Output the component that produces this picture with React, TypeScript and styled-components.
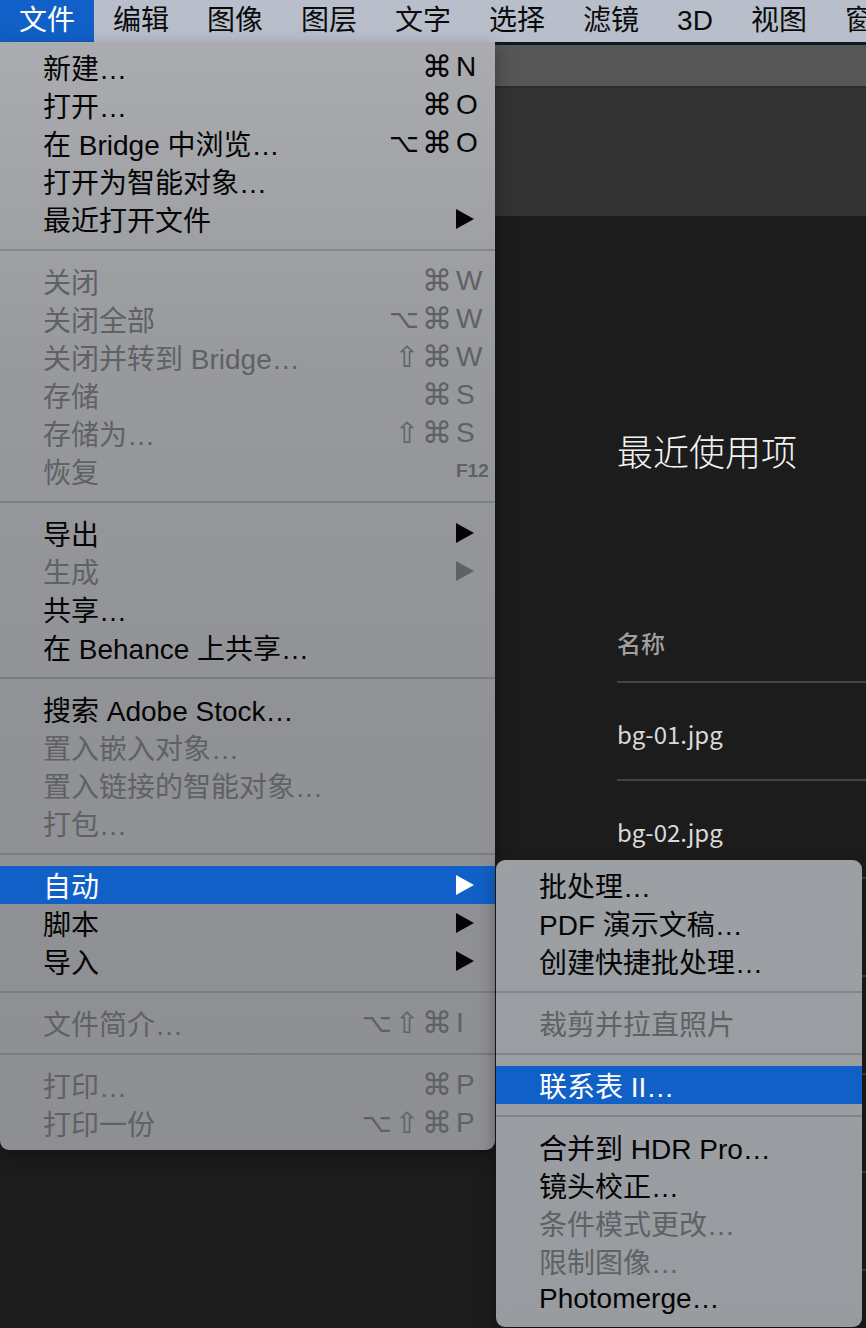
import React from "react";
import styled, { createGlobalStyle } from "styled-components";

const GlobalStyle = createGlobalStyle`
  html, body {
    margin: 0;
    padding: 0;
    background: #1c1c1c;
  }
  * {
    box-sizing: border-box;
  }
`;

const Screen = styled.div`
  position: relative;
  width: 866px;
  height: 1328px;
  overflow: hidden;
  display: flex;
  flex-direction: column;
  background: #1c1c1c;
  font-family: "Liberation Sans", "Noto Sans CJK SC", sans-serif;
`;

const MenuBar = styled.div`
  display: flex;
  height: 42px;
  flex-shrink: 0;
  background: #b8bfcb;
  white-space: nowrap;
  overflow: hidden;
`;

const BarItem = styled.div<{ $active?: boolean }>`
  padding: 0 19px;
  line-height: 42px;
  font-size: 28px;
  color: ${(p) => (p.$active ? "#fff" : "#0b0b0b")};
  background: ${(p) => (p.$active ? "#1160c7" : "transparent")};
`;

const TopStrip = styled.div`
  height: 3px;
  background: #121826;
`;

const ToolBand = styled.div`
  height: 43px;
  background: #565656;
  border-bottom: 2px solid #2b2b2b;
`;

const OptionsBand = styled.div`
  height: 128px;
  background: #333333;
`;

const Home = styled.div`
  flex: 1;
  padding-left: 617px;
  font-family: "Noto Sans CJK SC", sans-serif;
`;

const Title = styled.h1`
  margin: 209px 0 0;
  font-size: 36px;
  line-height: 50px;
  font-weight: 300;
  color: #f2f2f2;
  white-space: nowrap;
`;

const HeaderCell = styled.div`
  margin-top: 151px;
  padding-bottom: 21px;
  font-size: 24px;
  line-height: 34px;
  font-weight: 500;
  color: #a0a0a0;
  border-bottom: 2px solid #444;
`;

const FileRow = styled.div`
  height: 98px;
  padding-top: 4px;
  display: flex;
  align-items: center;
  font-size: 24px;
  color: #dadada;
  white-space: nowrap;
  border-bottom: 2px solid #424242;
`;

const Menu = styled.div<{ $left: number; $top: number; $width: number; $sub?: boolean }>`
  position: absolute;
  left: ${(p) => p.$left}px;
  top: ${(p) => p.$top}px;
  width: ${(p) => p.$width}px;
  padding: 6px 0 ${(p) => (p.$sub ? 9 : 8)}px;
  border-radius: ${(p) => (p.$sub ? "9px" : "0 0 9px 9px")};
  background: ${(p) =>
    p.$sub
      ? "linear-gradient(180deg, #9c9fa3 0%, #989b9f 100%)"
      : "linear-gradient(180deg, #aaacaf 0%, #97999c 30%, #909295 60%, #8d8f92 100%)"};
  box-shadow: 0 6px 18px rgba(0, 0, 0, 0.35);
  white-space: nowrap;
`;

const Row = styled.div<{ $active?: boolean; $disabled?: boolean }>`
  display: flex;
  align-items: center;
  height: 38px;
  padding: 0 5px 0 43px;
  font-size: 28px;
  background: ${(p) => (p.$active ? "#1160c7" : "transparent")};
  color: ${(p) => (p.$active ? "#fff" : p.$disabled ? "#5f6164" : "#050505")};
`;

const Label = styled.span`
  flex: 1;
`;

const Mods = styled.span`
  display: flex;
  justify-content: flex-end;
  gap: 3px;
`;

const Mod = styled.span<{ $size: number }>`
  font-family: "DejaVu Sans", sans-serif;
  font-size: ${(p) => p.$size}px;
  line-height: 38px;
`;

const Key = styled.span<{ $small?: boolean }>`
  width: 34px;
  margin-left: 4px;
  font-size: ${(p) => (p.$small ? "19px" : "28px")};
  font-weight: ${(p) => (p.$small ? 700 : 400)};
  display: flex;
  align-items: center;
`;

const Separator = styled.div`
  height: 24px;
  display: flex;
  align-items: center;
  &::after {
    content: "";
    flex: 1;
    height: 2px;
    background: rgba(70, 72, 76, 0.28);
  }
`;

type Item = {
  label: string;
  mods?: string[];
  keyName?: string;
  small?: boolean;
  disabled?: boolean;
  arrow?: boolean;
  active?: boolean;
};

// DejaVu draws these modifier glyphs at quite different widths
const modSize: Record<string, number> = { "⌘": 30, "⌥": 26, "⇧": 29 };

const mainMenu: Item[][] = [
  [
    { label: "新建…", mods: ["⌘"], keyName: "N" },
    { label: "打开…", mods: ["⌘"], keyName: "O" },
    { label: "在 Bridge 中浏览…", mods: ["⌥", "⌘"], keyName: "O" },
    { label: "打开为智能对象…" },
    { label: "最近打开文件", arrow: true },
  ],
  [
    { label: "关闭", mods: ["⌘"], keyName: "W", disabled: true },
    { label: "关闭全部", mods: ["⌥", "⌘"], keyName: "W", disabled: true },
    { label: "关闭并转到 Bridge…", mods: ["⇧", "⌘"], keyName: "W", disabled: true },
    { label: "存储", mods: ["⌘"], keyName: "S", disabled: true },
    { label: "存储为…", mods: ["⇧", "⌘"], keyName: "S", disabled: true },
    { label: "恢复", keyName: "F12", small: true, disabled: true },
  ],
  [
    { label: "导出", arrow: true },
    { label: "生成", arrow: true, disabled: true },
    { label: "共享…" },
    { label: "在 Behance 上共享…" },
  ],
  [
    { label: "搜索 Adobe Stock…" },
    { label: "置入嵌入对象…", disabled: true },
    { label: "置入链接的智能对象…", disabled: true },
    { label: "打包…", disabled: true },
  ],
  [
    { label: "自动", arrow: true, active: true },
    { label: "脚本", arrow: true },
    { label: "导入", arrow: true },
  ],
  [{ label: "文件简介…", mods: ["⌥", "⇧", "⌘"], keyName: "I", disabled: true }],
  [
    { label: "打印…", mods: ["⌘"], keyName: "P", disabled: true },
    { label: "打印一份", mods: ["⌥", "⇧", "⌘"], keyName: "P", disabled: true },
  ],
];

const autoMenu: Item[][] = [
  [{ label: "批处理…" }, { label: "PDF 演示文稿…" }, { label: "创建快捷批处理…" }],
  [{ label: "裁剪并拉直照片", disabled: true }],
  [{ label: "联系表 II…", active: true }],
  [
    { label: "合并到 HDR Pro…" },
    { label: "镜头校正…" },
    { label: "条件模式更改…", disabled: true },
    { label: "限制图像…", disabled: true },
    { label: "Photomerge…" },
  ],
];

const barItems = ["文件", "编辑", "图像", "图层", "文字", "选择", "滤镜", "3D", "视图", "窗口"];

// rows further down sit under the submenu, only their divider lines peek out
const files = ["bg-01.jpg", "bg-02.jpg", "", "", "", ""];

function Arrow() {
  return (
    <svg width="18" height="20" viewBox="0 0 18 20">
      <polygon points="0,0 18,10 0,20" fill="currentColor" />
    </svg>
  );
}

function MenuRow({ item }: { item: Item }) {
  return (
    <Row $active={item.active} $disabled={item.disabled}>
      <Label>{item.label}</Label>
      {item.mods && (
        <Mods>
          {item.mods.map((m, i) => (
            <Mod key={i} $size={modSize[m]}>
              {m}
            </Mod>
          ))}
        </Mods>
      )}
      <Key $small={item.small}>{item.arrow ? <Arrow /> : item.keyName}</Key>
    </Row>
  );
}

function MenuGroups({ groups }: { groups: Item[][] }) {
  return (
    <>
      {groups.map((g, gi) => (
        <React.Fragment key={gi}>
          {gi > 0 && <Separator />}
          {g.map((item) => (
            <MenuRow key={item.label} item={item} />
          ))}
        </React.Fragment>
      ))}
    </>
  );
}

export default function App() {
  return (
    <>
      <GlobalStyle />
      <Screen>
        <MenuBar>
          {barItems.map((b, i) => (
            <BarItem key={b} $active={i === 0}>
              {b}
            </BarItem>
          ))}
        </MenuBar>
        <TopStrip />
        <ToolBand />
        <OptionsBand />
        <Home>
          <Title>最近使用项</Title>
          <HeaderCell>名称</HeaderCell>
          {files.map((f, i) => (
            <FileRow key={i}>{f}</FileRow>
          ))}
        </Home>

        <Menu $left={0} $top={42} $width={495}>
          <MenuGroups groups={mainMenu} />
        </Menu>
        <Menu $left={496} $top={860} $width={366} $sub>
          <MenuGroups groups={autoMenu} />
        </Menu>
      </Screen>
    </>
  );
}
